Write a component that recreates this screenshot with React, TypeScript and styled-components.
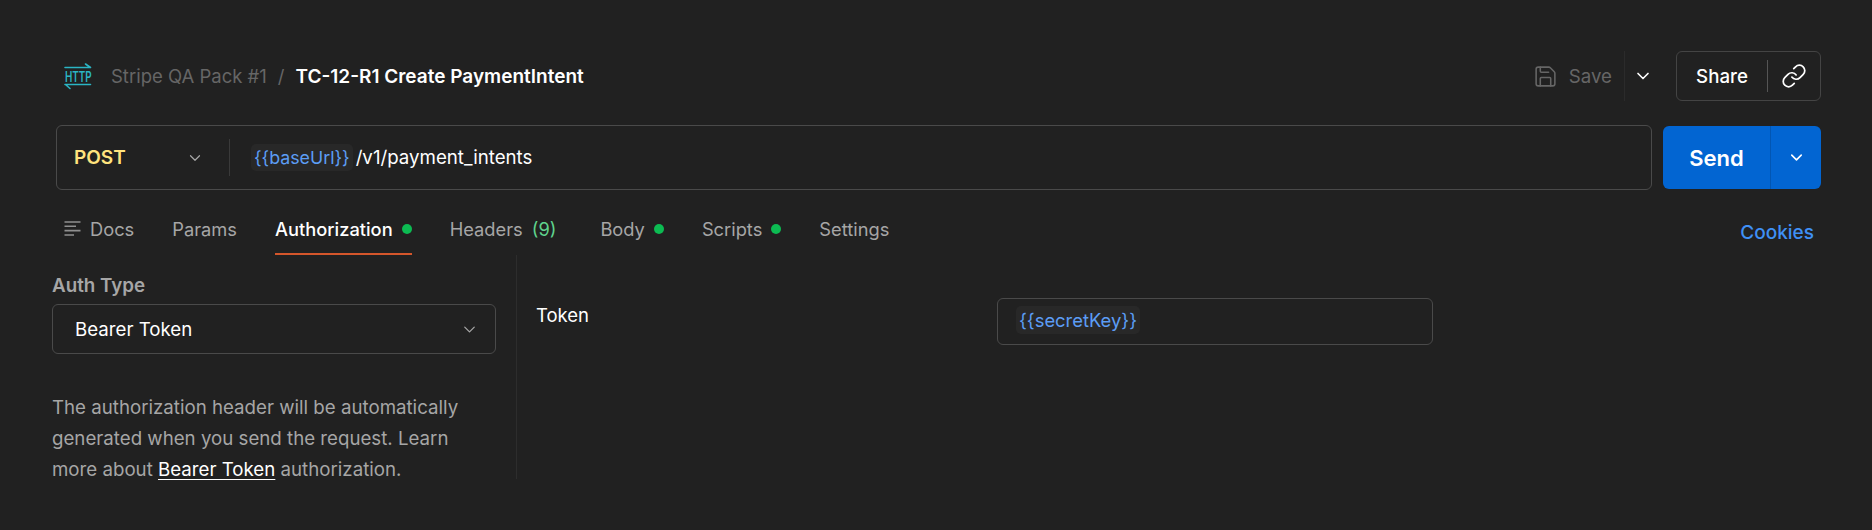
import React from "react";
import styled, { createGlobalStyle } from "styled-components";
import { ChevronDown, Link as LinkIcon, Save } from "lucide-react";

const GlobalStyle = createGlobalStyle`
    html, body {
        margin: 0;
        padding: 0;
        background: #212121;
    }
    body {
        font-family: Inter, "Liberation Sans", sans-serif;
        color: #ffffff;
    }
`;

const HttpIcon = () => (
    <svg width="32" height="28" viewBox="0 0 32 28" fill="none">
        <path d="M3 5.5H28.5M23.5 2L28.5 5.5" stroke="#2bb5c4" strokeWidth="1.6" strokeLinecap="round" />
        <path d="M3 22.5H28.5M3.5 22.5L8 26.5" stroke="#2bb5c4" strokeWidth="1.6" strokeLinecap="round" />
        <text transform="translate(3 20) scale(0.68 1)" fontFamily="Inter, sans-serif" fontSize="14.5" fontWeight="600" fill="#2bb5c4">HTTP</text>
    </svg>
);

const DocsIcon = () => (
    <svg width="17" height="17" viewBox="0 0 17 17" fill="none" stroke="#8f8f8f" strokeWidth="1.6">
        <path d="M0.5 2H16.5M0.5 6.3H12M0.5 10.6H16.5M0.5 15H10" />
    </svg>
);

export default function App() {
    return (
        <>
            <GlobalStyle />
            <Page>
                <TopRow>
                    <Crumbs>
                        <HttpIcon />
                        <Collection>Stripe QA Pack #1</Collection>
                        <Slash>/</Slash>
                        <RequestName>TC-12-R1 Create PaymentIntent</RequestName>
                    </Crumbs>
                    <Actions>
                        <SaveButton>
                            <Save size={25} strokeWidth={1.5} />
                            <span>Save</span>
                        </SaveButton>
                        <SaveMore>
                            <ChevronDown size={20} strokeWidth={2} />
                        </SaveMore>
                        <ShareBox>
                            <ShareLabel>Share</ShareLabel>
                            <ShareIcon>
                                <LinkIcon size={26} strokeWidth={1.6} />
                            </ShareIcon>
                        </ShareBox>
                    </Actions>
                </TopRow>

                <UrlRow>
                    <UrlBar>
                        <Method>
                            <MethodName>POST</MethodName>
                            <ChevronDown size={18} strokeWidth={1.6} />
                        </Method>
                        <Url>
                            <Variable $size={17.8}>{"{{baseUrl}}"}</Variable>
                            <UrlPath>/v1/payment_intents</UrlPath>
                        </Url>
                    </UrlBar>
                    <SendButton>
                        <SendLabel>Send</SendLabel>
                        <SendMore>
                            <ChevronDown size={19} strokeWidth={2} />
                        </SendMore>
                    </SendButton>
                </UrlRow>

                <TabRow>
                    <Tabs>
                        <Tab $gap={9}><DocsIcon />Docs</Tab>
                        <Tab>Params</Tab>
                        <Tab $active>Authorization<Dot /></Tab>
                        <Tab $extra={6}>Headers<Count>(9)</Count></Tab>
                        <Tab>Body<Dot /></Tab>
                        <Tab>Scripts<Dot /></Tab>
                        <Tab>Settings</Tab>
                    </Tabs>
                    <Cookies>Cookies</Cookies>
                </TabRow>

                <Panels>
                    <AuthSide>
                        <FieldLabel>Auth Type</FieldLabel>
                        <Select>
                            <span>Bearer Token</span>
                            <ChevronDown size={19} strokeWidth={1.6} color="#a6a6a6" />
                        </Select>
                        <Help>
                            The authorization header will be automatically generated when you send the request. Learn more about <HelpLink>Bearer Token</HelpLink> authorization.
                        </Help>
                    </AuthSide>
                    <TokenSide>
                        <TokenLabel>Token</TokenLabel>
                        <TokenInput>
                            <Variable $size={18.4}>{"{{secretKey}}"}</Variable>
                        </TokenInput>
                    </TokenSide>
                </Panels>
            </Page>
        </>
    );
}

const Page = styled.div`
    width: 1872px;
    height: 530px;
    box-sizing: border-box;
    padding: 51px 51px 0 56px;
    overflow: hidden;
    background: #212121;
`;

const TopRow = styled.div`
    display: flex;
    justify-content: space-between;
    align-items: center;
    height: 50px;
    padding-left: 6px;
`;

const Crumbs = styled.div`
    display: flex;
    align-items: center;
    font-size: 18.5px;
`;

const Collection = styled.span`
    margin-left: 17px;
    color: #666666;
`;

const Slash = styled.span`
    margin: 0 11px;
    color: #666666;
`;

const RequestName = styled.span`
    color: #ffffff;
    font-size: 19px;
    font-weight: 600;
`;

const Actions = styled.div`
    display: flex;
    align-items: center;
    height: 50px;
`;

const SaveButton = styled.div`
    display: flex;
    align-items: center;
    gap: 11px;
    height: 50px;
    padding-right: 12px;
    color: #666666;
    font-size: 18.7px;
`;

const SaveMore = styled.div`
    display: flex;
    align-items: center;
    height: 50px;
    padding: 0 23px 0 8px;
    border-left: 1px solid #2b2b2b;
    color: #ffffff;
`;

const ShareBox = styled.div`
    display: flex;
    align-items: center;
    box-sizing: border-box;
    width: 145px;
    height: 50px;
    border: 1.5px solid #444444;
    border-radius: 6px;
`;

const ShareLabel = styled.span`
    flex: 1;
    text-align: center;
    font-size: 18.7px;
    font-weight: 500;
`;

const ShareIcon = styled.div`
    display: flex;
    align-items: center;
    justify-content: center;
    box-sizing: border-box;
    width: 53px;
    height: 32px;
    border-left: 1.5px solid #555555;
`;

const UrlRow = styled.div`
    display: flex;
    gap: 11px;
    margin-top: 24px;
`;

const UrlBar = styled.div`
    display: flex;
    align-items: center;
    box-sizing: border-box;
    width: 1596px;
    height: 65px;
    border: 1.5px solid #4a4a4a;
    border-radius: 6px;
`;

const Method = styled.div`
    display: flex;
    align-items: center;
    justify-content: space-between;
    box-sizing: border-box;
    width: 173px;
    height: 37px;
    padding: 0 25px 0 17px;
    border-right: 1px solid #3a3a3a;
    color: #a6a6a6;
`;

const MethodName = styled.span`
    color: #ffe47e;
    font-size: 19px;
    font-weight: 600;
`;

const Url = styled.div`
    display: flex;
    align-items: center;
    gap: 3px;
    padding-left: 21px;
    font-size: 18.7px;
`;

const Variable = styled.span<{ $size: number }>`
    padding: 3px 3px;
    border-radius: 5px;
    background: #282828;
    color: #5c9df5;
    font-size: ${(p) => p.$size}px;
`;

const UrlPath = styled.span`
    color: #ffffff;
`;

const SendButton = styled.div`
    display: flex;
    align-items: stretch;
    width: 158px;
    height: 63px;
    margin-top: 1px;
    border-radius: 6px;
    background: #0265d2;
    overflow: hidden;
`;

const SendLabel = styled.div`
    display: flex;
    align-items: center;
    justify-content: center;
    width: 107px;
    font-size: 22px;
    font-weight: 600;
`;

const SendMore = styled.div`
    display: flex;
    flex: 1;
    align-items: center;
    justify-content: center;
    border-left: 1px solid #0256b3;
`;

const TabRow = styled.div`
    display: flex;
    justify-content: space-between;
    height: 65px;
    padding-left: 8px;
`;

const Tabs = styled.div`
    display: flex;
    gap: 38px;
    height: 65px;
    box-sizing: border-box;
`;

const Tab = styled.div<{ $active?: boolean; $gap?: number; $extra?: number }>`
    display: flex;
    align-items: center;
    gap: ${(p) => p.$gap ?? 9}px;
    box-sizing: border-box;
    height: 65px;
    padding-top: 14px;
    margin-right: ${(p) => p.$extra ?? 0}px;
    border-bottom: 2px solid ${(p) => (p.$active ? "#d4562b" : "transparent")};
    color: ${(p) => (p.$active ? "#ffffff" : "#a6a6a6")};
    font-size: 18.3px;
    font-weight: ${(p) => (p.$active ? 500 : 400)};
`;

const Dot = styled.span`
    width: 10px;
    height: 10px;
    border-radius: 50%;
    background: #0cbb52;
`;

const Count = styled.span`
    color: #5fd38d;
`;

const Cookies = styled.div`
    align-self: center;
    margin: 19px 7px 0 0;
    color: #3f90f5;
    font-size: 19px;
    font-weight: 500;
`;

const Panels = styled.div`
    display: flex;
`;

const AuthSide = styled.div`
    box-sizing: border-box;
    width: 465px;
    height: 224px;
    margin-left: -4px;
    padding: 21px 20px 0 0;
    border-right: 1px solid #2d2d2d;
`;

const FieldLabel = styled.div`
    color: #a6a6a6;
    font-size: 18.8px;
    font-weight: 600;
    line-height: 20px;
`;

const Select = styled.div`
    display: flex;
    align-items: center;
    justify-content: space-between;
    box-sizing: border-box;
    width: 444px;
    height: 50px;
    margin-top: 8px;
    padding: 0 16px 0 22px;
    border: 1.5px solid #4a4a4a;
    border-radius: 6px;
    font-size: 18.7px;
`;

const Help = styled.p`
    margin: 38px 0 0;
    color: #a6a6a6;
    font-size: 18.7px;
    line-height: 31px;
`;

const HelpLink = styled.span`
    color: #ffffff;
    text-decoration: underline;
    text-underline-offset: 3px;
`;

const TokenSide = styled.div`
    display: flex;
    align-items: flex-start;
    padding: 43px 0 0 19px;
`;

const TokenLabel = styled.div`
    width: 461px;
    padding-top: 6px;
    font-size: 18.5px;
    font-weight: 400;
`;

const TokenInput = styled.div`
    display: flex;
    align-items: center;
    box-sizing: border-box;
    width: 436px;
    height: 47px;
    padding: 0 0 3px 18px;
    border: 1.5px solid #4a4a4a;
    border-radius: 6px;
`;
